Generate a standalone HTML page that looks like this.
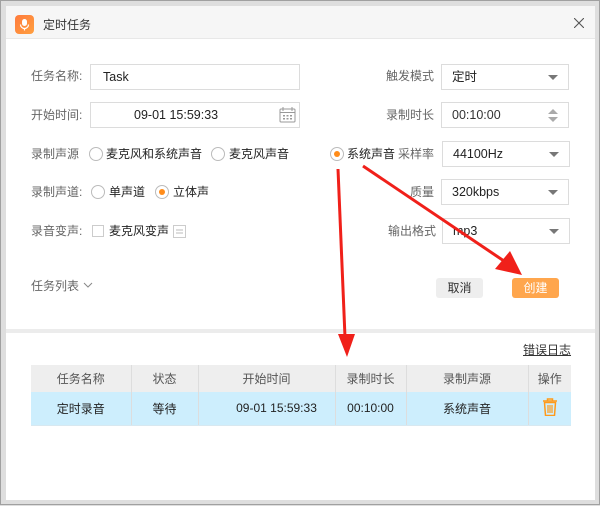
<!DOCTYPE html>
<html><head><meta charset="utf-8"><style>
*{margin:0;padding:0;box-sizing:border-box}
body{width:600px;height:505px;background:#dedede;border:1px solid #a0a0a0;position:relative;overflow:hidden;font-family:"Liberation Sans","Noto Sans CJK SC",sans-serif;font-size:12px;color:#333}
.a{position:absolute}
.win{left:5px;top:5px;width:589px;height:494px;background:#fff}
.tb{left:5px;top:5px;width:589px;height:33px;background:#f6f6f6;border-bottom:1px solid #e8e8e8}
.lbl{color:#666;font-size:12px;line-height:14px}
.inp{border:1px solid #dcdcdc;background:#fff;height:26px;line-height:24px;padding-left:10px;font-size:12.5px;color:#222}
.dd{position:absolute;right:10px;top:10px;width:0;height:0;border-left:5px solid transparent;border-right:5px solid transparent;border-top:5px solid #777}
.rad{width:14px;height:14px;border:1px solid #bbb;border-radius:50%;background:#fff}
.rad.on::after{content:"";position:absolute;left:3px;top:3px;width:6px;height:6px;border-radius:50%;background:#ff8c1a}
.rt{color:#222;font-size:12px;line-height:14px}
.btn{height:20px;line-height:20px;text-align:center;border-radius:3px;font-size:12px}
table{border-collapse:collapse;position:absolute;left:30px;top:364px;width:540px;table-layout:fixed}
td{text-align:center;font-size:12px;border-left:1px solid #ddd}
td:first-child{border-left:none}
tr.h td{background:#eee;height:27px;color:#555}
tr.r td{background:#cdeefd;height:33px;color:#222;border-bottom:1px solid #d8e8f0}
</style></head><body>
<div class="a win"></div>
<div class="a tb"></div>
<div class="a" style="left:14px;top:14px;width:19px;height:19px;border-radius:4px;background:linear-gradient(135deg,#ff7a3c,#ffa040)"></div>
<svg class="a" style="left:14px;top:14px" width="19" height="19" viewBox="0 0 19 19"><rect x="7" y="4" width="5" height="7" rx="2.5" fill="#fff"/><path d="M5.5 9.5a4 4 0 0 0 8 0M9.5 13.5v2" stroke="#fff" stroke-width="1.2" fill="none"/></svg>
<div class="a" style="left:42px;top:15px;font-size:12px;color:#333">定时任务</div>
<svg class="a" style="left:573px;top:17px" width="10" height="10"><path d="M0 0L10 10M10 0L0 10" stroke="#555" stroke-width="1.1"/></svg>

<div class="a lbl" style="left:30px;top:68px">任务名称:</div>
<div class="a inp" style="left:89px;top:63px;width:210px;padding-left:12px">Task</div>
<div class="a lbl" style="left:30px;top:107px">开始时间:</div>
<div class="a inp" style="left:89px;top:101px;width:210px;padding-left:43px">09-01 15:59:33</div>
<svg class="a" style="left:278px;top:106px" width="17" height="16"><rect x="1" y="2" width="15" height="13" rx="1" fill="none" stroke="#999"/><path d="M1 5.5h15" stroke="#999"/><path d="M4 0v4M13 0v4" stroke="#999"/><g fill="#999"><rect x="4" y="8" width="2" height="1.5"/><rect x="7.5" y="8" width="2" height="1.5"/><rect x="11" y="8" width="2" height="1.5"/><rect x="4" y="11" width="2" height="1.5"/><rect x="7.5" y="11" width="2" height="1.5"/><rect x="11" y="11" width="2" height="1.5"/></g></svg>

<div class="a lbl" style="left:30px;top:146px">录制声源</div>
<div class="a rad" style="left:88px;top:146px"></div><div class="a rt" style="left:105px;top:146px">麦克风和系统声音</div>
<div class="a rad" style="left:210px;top:146px"></div><div class="a rt" style="left:228px;top:146px">麦克风声音</div>
<div class="a rad on" style="left:329px;top:146px"></div><div class="a rt" style="left:346px;top:146px">系统声音</div>

<div class="a lbl" style="left:30px;top:184px">录制声道:</div>
<div class="a rad" style="left:90px;top:184px"></div><div class="a rt" style="left:108px;top:184px">单声道</div>
<div class="a rad on" style="left:154px;top:184px"></div><div class="a rt" style="left:172px;top:184px">立体声</div>

<div class="a lbl" style="left:30px;top:223px">录音变声:</div>
<div class="a" style="left:91px;top:224px;width:12px;height:12px;border:1px solid #ccc"></div>
<div class="a rt" style="left:108px;top:223px">麦克风变声</div>
<svg class="a" style="left:172px;top:224px" width="13" height="13"><rect x=".5" y=".5" width="12" height="12" fill="none" stroke="#ccc"/><path d="M3 5h7M3 8h7" stroke="#bbb"/></svg>

<div class="a lbl" style="left:385px;top:68px">触发模式</div>
<div class="a inp" style="left:440px;top:63px;width:128px">定时<div class="dd"></div></div>
<div class="a lbl" style="left:385px;top:107px">录制时长</div>
<div class="a inp" style="left:440px;top:101px;width:128px;color:#333">00:10:00
<div class="a" style="right:10px;top:6px;border-left:5px solid transparent;border-right:5px solid transparent;border-bottom:5px solid #aaa"></div>
<div class="a" style="right:10px;top:14px;border-left:5px solid transparent;border-right:5px solid transparent;border-top:5px solid #aaa"></div></div>
<div class="a lbl" style="left:397px;top:146px">采样率</div>
<div class="a inp" style="left:441px;top:140px;width:128px">44100Hz<div class="dd"></div></div>
<div class="a lbl" style="left:409px;top:184px">质量</div>
<div class="a inp" style="left:440px;top:178px;width:128px">320kbps<div class="dd"></div></div>
<div class="a lbl" style="left:387px;top:223px">输出格式</div>
<div class="a inp" style="left:441px;top:217px;width:128px">mp3<div class="dd"></div></div>

<div class="a lbl" style="left:30px;top:278px">任务列表</div>
<svg class="a" style="left:82px;top:281px" width="10" height="7"><path d="M1 1l4 4 4-4" stroke="#888" fill="none"/></svg>
<div class="a btn" style="left:435px;top:277px;width:47px;background:#eee;color:#333">取消</div>
<div class="a btn" style="left:511px;top:277px;width:47px;background:#ffa64d;color:#fff">创建</div>

<div class="a" style="left:5px;top:328px;width:589px;height:4px;background:#ececec"></div>
<div class="a" style="left:522px;top:340px;font-size:12px;color:#333;text-decoration:underline">错误日志</div>

<table>
<colgroup><col style="width:100px"><col style="width:67px"><col style="width:137px"><col style="width:71px"><col style="width:122px"><col style="width:43px"></colgroup>
<tr class="h"><td>任务名称</td><td>状态</td><td>开始时间</td><td>录制时长</td><td>录制声源</td><td>操作</td></tr>
<tr class="r"><td>定时录音</td><td>等待</td><td style="padding-left:20px">09-01 15:59:33</td><td>00:10:00</td><td>系统声音</td><td><svg width="16" height="18" viewBox="0 0 16 18"><path d="M1 3h14M5.5 3V1h5v2" stroke="#ff9a1a" stroke-width="1.5" fill="none"/><path d="M2.5 4.5h11l-1 13h-9z" fill="none" stroke="#ff9a1a" stroke-width="1.5"/><path d="M6 7v8M8 7v8M10 7v8" stroke="#ff9a1a" stroke-width="1.2"/></svg></td></tr>
</table>

<svg class="a" style="left:0;top:0" width="600" height="505">
<path d="M362 165L503 260" stroke="#f0201a" stroke-width="3"/>
<path d="M521 274L494 268L509 250z" fill="#f0201a"/>
<path d="M337 168L344 336" stroke="#f0201a" stroke-width="3"/>
<path d="M346 356L337 333L354 333z" fill="#f0201a"/>
</svg>
</body></html>
